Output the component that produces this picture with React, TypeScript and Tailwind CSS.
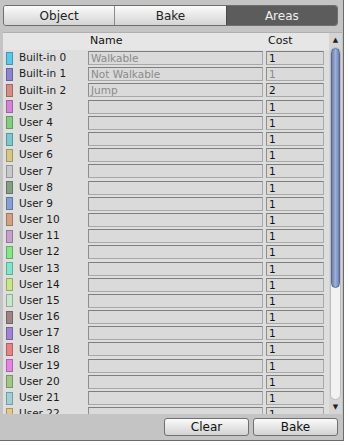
const areas: { label: string; color: string; name: string; cost: string; dim?: boolean }[] = [
    { label: 'Built-in 0', color: '#5ac8e8', name: 'Walkable', cost: '1' },
    { label: 'Built-in 1', color: '#8c84cc', name: 'Not Walkable', cost: '1', dim: true },
    { label: 'Built-in 2', color: '#d48c84', name: 'Jump', cost: '2' },
    { label: 'User 3', color: '#d484d4', name: '', cost: '1' },
    { label: 'User 4', color: '#84cc84', name: '', cost: '1' },
    { label: 'User 5', color: '#7cc8cc', name: '', cost: '1' },
    { label: 'User 6', color: '#d4c884', name: '', cost: '1' },
    { label: 'User 7', color: '#c8c8c8', name: '', cost: '1' },
    { label: 'User 8', color: '#84a084', name: '', cost: '1' },
    { label: 'User 9', color: '#84a0d4', name: '', cost: '1' },
    { label: 'User 10', color: '#d4a084', name: '', cost: '1' },
    { label: 'User 11', color: '#c8a0c8', name: '', cost: '1' },
    { label: 'User 12', color: '#84e684', name: '', cost: '1' },
    { label: 'User 13', color: '#84e6c8', name: '', cost: '1' },
    { label: 'User 14', color: '#c8e684', name: '', cost: '1' },
    { label: 'User 15', color: '#c8e6c8', name: '', cost: '1' },
    { label: 'User 16', color: '#a08484', name: '', cost: '1' },
    { label: 'User 17', color: '#a084d4', name: '', cost: '1' },
    { label: 'User 18', color: '#e68484', name: '', cost: '1' },
    { label: 'User 19', color: '#e684e6', name: '', cost: '1' },
    { label: 'User 20', color: '#a0c884', name: '', cost: '1' },
    { label: 'User 21', color: '#a0d0d4', name: '', cost: '1' },
    { label: 'User 22', color: '#e6c884', name: '', cost: '1' },
];

const field =
    'h-[14px] border border-[#a8a8a8] border-t-[#7e7e7e] border-l-[#8e8e8e] bg-[#dadada] pl-[2px] leading-[12px]';

export default function App() {
    return (
        <div className="h-[445px] w-[348px] bg-white" style={{ fontFamily: '"DejaVu Sans", sans-serif' }}>
            <div className="flex h-[441px] w-[344px] flex-col border-r border-b border-[#6a6a6a] bg-[#c4c4c4] text-[10.5px] text-[#111]">
                {/* tabs */}
                <div className="ml-[3px] mt-[5px] flex h-[21px] w-[335px] overflow-hidden rounded-[3px] border border-[#6e6e6e]">
                    <div className="flex flex-1 items-center justify-center bg-gradient-to-b from-[#fbfbfb] to-[#d4d4d4] text-[12px] text-[#222]">
                        Object
                    </div>
                    <div className="flex flex-1 items-center justify-center border-l border-[#8a8a8a] bg-gradient-to-b from-[#fbfbfb] to-[#d4d4d4] text-[12px] text-[#222]">
                        Bake
                    </div>
                    <div className="flex flex-1 items-center justify-center border-l border-[#4a4a4a] bg-[#5c5c5c] text-[12px] text-[#f0f0f0]">
                        Areas
                    </div>
                </div>

                {/* list */}
                <div className="ml-[3px] mt-[6px] flex h-[382px] w-[339px] border-t border-[#b0b0b0] bg-[#dedede]">
                    <div className="flex w-[326px] flex-col overflow-hidden">
                        <div className="flex h-[17px] shrink-0 items-center bg-[#e6e6e6] text-[11px]">
                            <div className="w-[85px]" />
                            <div className="w-[175px] pl-[2px]">Name</div>
                            <div className="pl-[5px]">Cost</div>
                        </div>
                        {areas.map((a) => (
                            <div key={a.label} className="flex h-[16.2px] shrink-0 items-center">
                                <div className="flex w-[85px] items-center">
                                    <span
                                        className="ml-[3px] h-[13px] w-[7px] border border-[#00000040]"
                                        style={{ backgroundColor: a.color }}
                                    />
                                    <span className="ml-[6px] text-[10.5px] text-[#1a1a1a]">{a.label}</span>
                                </div>
                                <div className={`w-[175px] text-[10.5px] text-[#8a8a8a] ${field}`}>{a.name}</div>
                                <div
                                    className={`ml-[3px] w-[58px] text-[10.5px] ${field} ${a.dim ? 'text-[#8a8a8a]' : 'text-[#111]'}`}
                                >
                                    {a.cost}
                                </div>
                            </div>
                        ))}
                    </div>
                    {/* scrollbar */}
                    <div className="flex w-[13px] flex-col items-center bg-[#d4d4d4]">
                        <div className="flex h-[14px] w-full items-center justify-center text-[7px] text-[#222]">▲</div>
                        <div className="flex w-[11px] flex-1 flex-col rounded-full border border-[#bdbdbd] bg-[#f2f2f2]">
                            <div className="h-[240px] rounded-full border border-[#54689a] bg-gradient-to-r from-[#6f82b0] via-[#9fb0d8] to-[#6f82b0]" />
                        </div>
                        <div className="flex h-[14px] w-full items-center justify-center text-[7px] text-[#222]">▼</div>
                    </div>
                </div>

                {/* bottom buttons */}
                <div className="mt-[4px] flex justify-end gap-[4px] pr-[5px]">
                    <div className="flex h-[18px] w-[85px] items-center justify-center rounded-[3px] border border-[#707070] bg-gradient-to-b from-[#fafafa] to-[#d2d2d2] text-[12px]">
                        Clear
                    </div>
                    <div className="flex h-[18px] w-[85px] items-center justify-center rounded-[3px] border border-[#707070] bg-gradient-to-b from-[#fafafa] to-[#d2d2d2] text-[12px]">
                        Bake
                    </div>
                </div>
            </div>
        </div>
    );
}
